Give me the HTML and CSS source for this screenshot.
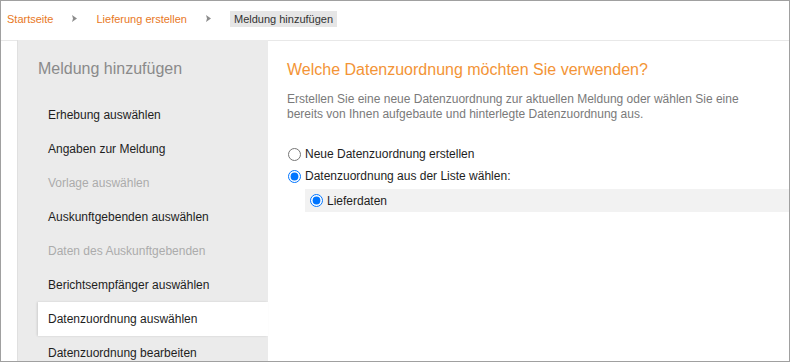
FILE: index.html
```html
<html>
    <head>
        <meta charset="utf-8" />
        <link rel="stylesheet" href="styles.css">
    </head>
    <body>
        <div class="frame">
            <div class="breadcrumb">
                <a class="crumb" href="#">Startseite</a>
                <svg class="sep" width="5" height="7" viewBox="0 0 5 7"><polygon points="0,0 5,3.5 0,7 1,3.5" fill="#8c8c8c"/></svg>
                <a class="crumb" href="#">Lieferung erstellen</a>
                <svg class="sep" width="5" height="7" viewBox="0 0 5 7"><polygon points="0,0 5,3.5 0,7 1,3.5" fill="#8c8c8c"/></svg>
                <span class="current">Meldung hinzufügen</span>
            </div>

            <div class="main">
                <div class="sidebar">
                    <div class="sidebar-title">Meldung hinzufügen</div>
                    <div class="step">Erhebung auswählen</div>
                    <div class="step">Angaben zur Meldung</div>
                    <div class="step disabled">Vorlage auswählen</div>
                    <div class="step">Auskunftgebenden auswählen</div>
                    <div class="step disabled">Daten des Auskunftgebenden</div>
                    <div class="step">Berichtsempfänger auswählen</div>
                    <div class="step active">Datenzuordnung auswählen</div>
                    <div class="step">Datenzuordnung bearbeiten</div>
                </div>

                <div class="content">
                    <h1>Welche Datenzuordnung möchten Sie verwenden?</h1>
                    <p>Erstellen Sie eine neue Datenzuordnung zur aktuellen Meldung oder wählen Sie eine bereits von Ihnen aufgebaute und hinterlegte Datenzuordnung aus.</p>

                    <label class="choice">
                        <input type="radio" name="mode" value="new">Neue Datenzuordnung erstellen
                    </label>
                    <label class="choice">
                        <input type="radio" name="mode" value="list" checked>Datenzuordnung aus der Liste wählen:
                    </label>
                    <label class="choice sub">
                        <input type="radio" name="mapping" value="lieferdaten" checked>Lieferdaten
                    </label>
                </div>
            </div>
        </div>
    </body>
</html>
```

FILE: styles.css
```css
body {
    margin: 0;
    font-family: "Liberation Sans", Arial, sans-serif;
}

.frame {
    box-sizing: border-box;
    width: 790px;
    height: 362px;
    border: solid 1px #a0a0a0;
    overflow: hidden;
    background-color: white;
}

.breadcrumb {
    box-sizing: border-box;
    height: 39px;
    padding: 0 0 4px 6px;
    display: flex;
    align-items: center;
    font-size: 11px;
}

.crumb {
    color: #e8781e;
    text-decoration: none;
}

.sep {
    margin: 0 19px;
}

.current {
    background-color: #e6e6e6;
    color: #333333;
    padding: 2px 4px;
    line-height: 12px;
}

.main {
    display: flex;
    border-top: solid 1px #e8e8e8;
    height: 320px;
}

.sidebar {
    width: 251px;
    margin: -1px 0 0 16px;
    background-color: #ebebeb;
    box-shadow: inset 1px 0 0 #e0e0e0;
    flex-shrink: 0;
}

.sidebar-title {
    padding: 19px 0 0 21px;
    margin-bottom: 19px;
    font-size: 16px;
    line-height: 20px;
    color: #8a8a8a;
}

.step {
    margin-left: 21px;
    padding-left: 10px;
    height: 34px;
    line-height: 34px;
    font-size: 12px;
    color: #1e1e1e;
}

.step.disabled {
    color: #ababab;
}

.step.active {
    background-color: white;
    box-shadow: -1px 0 2px rgba(0, 0, 0, 0.12);
}

.content {
    flex: 1;
    padding: 19px 0 0 19px;
}

h1 {
    margin: 0;
    font-size: 16px;
    font-weight: normal;
    line-height: 20px;
    color: #f39436;
}

p {
    margin: 12px 30px 0 0;
    font-size: 12px;
    line-height: 15px;
    color: #7a7a7a;
}

.choice {
    display: flex;
    align-items: center;
    height: 22px;
    font-size: 12px;
    color: #1e1e1e;
}

.choice:first-of-type {
    margin-top: 21px;
}

.choice input {
    width: 13px;
    height: 13px;
    margin: 0 4px 0 1px;
}

.choice.sub {
    margin-top: 2px;
    margin-left: 18px;
    height: 23px;
    padding-left: 4px;
    background-color: #f2f2f2;
}
```
